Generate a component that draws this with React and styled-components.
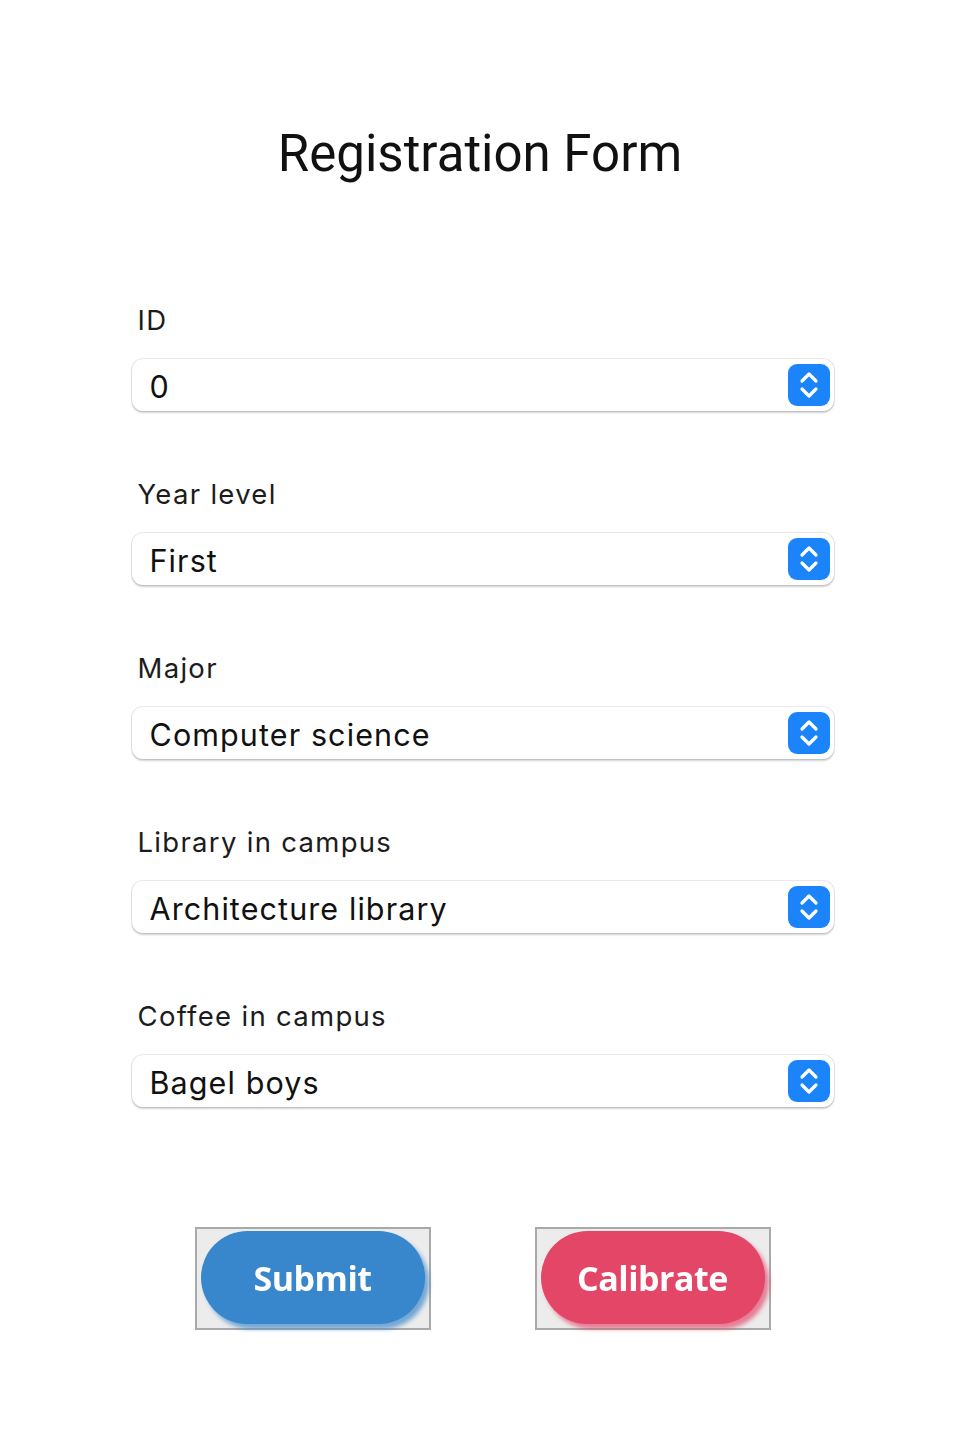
import React, { useState } from "react";
import styled, { createGlobalStyle } from "styled-components";

const GlobalStyle = createGlobalStyle`
  body {
    margin: 0;
    background: #ffffff;
  }
`;

const fields = [
  { label: "ID", value: "0", options: ["0", "1", "2", "3"] },
  { label: "Year level", value: "First", options: ["First", "Second", "Third", "Fourth"] },
  { label: "Major", value: "Computer science", options: ["Computer science", "Mathematics", "Physics"] },
  { label: "Library in campus", value: "Architecture library", options: ["Architecture library", "Main library", "Law library"] },
  { label: "Coffee in campus", value: "Bagel boys", options: ["Bagel boys", "Starbucks", "Peet's"] },
];

const Stepper = () => (
  <StepperBox>
    <svg width="22" height="30" viewBox="0 0 22 30" fill="none">
      <path d="M4 11 L11 4 L18 11" stroke="#fff" strokeWidth="3.2" strokeLinecap="round" strokeLinejoin="round" />
      <path d="M4 19 L11 26 L18 19" stroke="#fff" strokeWidth="3.2" strokeLinecap="round" strokeLinejoin="round" />
    </svg>
  </StepperBox>
);

const Field = ({ field }) => {
  const [value, setValue] = useState(field.value);
  return (
    <FieldGroup>
      <Label>{field.label}</Label>
      <SelectBox>
        <Select value={value} onChange={(e) => setValue(e.target.value)}>
          {field.options.map((o) => (
            <option key={o}>{o}</option>
          ))}
        </Select>
        <Stepper />
      </SelectBox>
    </FieldGroup>
  );
};

const App = () => {
  return (
    <Page>
      <GlobalStyle />
      <Title>Registration Form</Title>
      <Form>
        {fields.map((f) => (
          <Field key={f.label} field={f} />
        ))}
      </Form>
      <Buttons>
        <ButtonFrame>
          <Pill color="#3886cb">Submit</Pill>
        </ButtonFrame>
        <ButtonFrame>
          <Pill color="#e44667">Calibrate</Pill>
        </ButtonFrame>
      </Buttons>
    </Page>
  );
};

const Page = styled.div`
  width: 969px;
  min-height: 1440px;
  display: flex;
  flex-direction: column;
  align-items: center;
  padding-top: 122px;
  box-sizing: border-box;
`;

const Title = styled.h1`
  font-family: Roboto, "Liberation Sans", sans-serif;
  font-weight: 400;
  font-size: 51px;
  line-height: 64px;
  margin: 0 0 0 -9px;
  color: #111;
`;

const Form = styled.div`
  width: 702px;
  margin-top: 115px;
  margin-left: -4px;
  display: flex;
  flex-direction: column;
  gap: 64px;
`;

const FieldGroup = styled.div`
  display: flex;
  flex-direction: column;
  gap: 20px;
`;

const Label = styled.label`
  font-family: Inter, "Noto Sans", sans-serif;
  font-size: 27.5px;
  line-height: 38px;
  letter-spacing: 1.3px;
  color: #1c1c1c;
  padding-left: 6px;
`;

const SelectBox = styled.div`
  height: 52px;
  display: flex;
  align-items: center;
  border-radius: 11px;
  background: #fff;
  box-shadow: 0 0 0 1px rgba(0, 0, 0, 0.08), 0 1.5px 2px rgba(0, 0, 0, 0.18);
  padding-right: 4px;
  box-sizing: border-box;
`;

const Select = styled.select`
  appearance: none;
  -webkit-appearance: none;
  flex: 1;
  height: 100%;
  border: none;
  outline: none;
  background: transparent;
  padding: 2px 0 0 18px;
  font-family: Inter, "Noto Sans", sans-serif;
  font-size: 30.5px;
  letter-spacing: 1.1px;
  color: #111;
`;

const StepperBox = styled.div`
  width: 42px;
  height: 42px;
  border-radius: 9px;
  background: #1b84fb;
  display: flex;
  align-items: center;
  justify-content: center;
  flex-shrink: 0;
`;

const Buttons = styled.div`
  margin-top: 120px;
  display: flex;
  gap: 104px;
  margin-left: -4px;
`;

const ButtonFrame = styled.div`
  width: 236px;
  height: 103px;
  box-sizing: border-box;
  border: 2px solid #a9a9a9;
  background: #ececec;
  padding: 2px 4px 4px 4px;
  display: flex;
`;

const Pill = styled.button`
  flex: 1;
  border: none;
  border-radius: 48px;
  background: ${(p) => p.color};
  color: #fff;
  font-family: "Open Sans", "Noto Sans", sans-serif;
  font-weight: 700;
  font-size: 34px;
  letter-spacing: -0.5px;
  box-shadow: 4px 5px 4px ${(p) => p.color}aa;
  filter: blur(0.6px);
  cursor: pointer;
`;

export default App;
